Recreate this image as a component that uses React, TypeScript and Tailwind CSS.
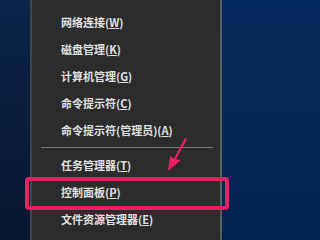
const items = [
  { label: "网络连接", key: "W" },
  { label: "磁盘管理", key: "K" },
  { label: "计算机管理", key: "G" },
  { label: "命令提示符", key: "C" },
  { label: "命令提示符(管理员)", key: "A" },
]

const items2 = [
  { label: "任务管理器", key: "T" },
  { label: "控制面板", key: "P" },
  { label: "文件资源管理器", key: "E" },
]

function Row({ label, k }: { label: string; k: string }) {
  return (
    <div className="flex h-[27px] shrink-0 items-center pl-[29px] text-[11px] leading-none text-[#e0e0e0] font-semibold">
      <span>
        {label}(<span className="underline underline-offset-1">{k}</span>)
      </span>
    </div>
  )
}

export default function App() {
  return (
    <div
      className="relative flex h-[240px] w-[320px] overflow-hidden"
      style={{ fontFamily: '"Noto Sans CJK SC", "Noto Sans", sans-serif' }}
    >
      <div className="w-[30px] bg-gradient-to-b from-[#0b2448] via-[#0a1d3a] to-[#081630]" />
      <div className="flex w-[192px] flex-col border-x-2 border-l-[#3e4550] border-r-[#5c5f66] bg-[#2c2c2c] pt-[9px]">
        {items.map((it) => (
          <Row key={it.label} label={it.label} k={it.key} />
        ))}
        <div className="pl-[9px] pr-[7px] pt-[3px] pb-[4px]">
          <div className="h-px bg-[#7a7a7a]" />
        </div>
        {items2.map((it) => (
          <Row key={it.label} label={it.label} k={it.key} />
        ))}
      </div>
      <div className="flex-1 bg-gradient-to-b from-[#032a5c] via-[#032858] to-[#03234f]" />

      <div className="absolute left-[25px] top-[177px] h-[33px] w-[204px] rounded-[4px] border-[4px] border-[#ee1f61]" />

      <svg className="absolute left-0 top-0" width="320" height="240" viewBox="0 0 320 240">
        <path d="M185.5 139.5 L175.5 158" stroke="#ee1f61" strokeWidth="2.2" strokeLinecap="round" />
        <path d="M168 171 L170 156 L175 159 L181 160 Z" fill="#ee1f61" />
      </svg>
    </div>
  )
}
